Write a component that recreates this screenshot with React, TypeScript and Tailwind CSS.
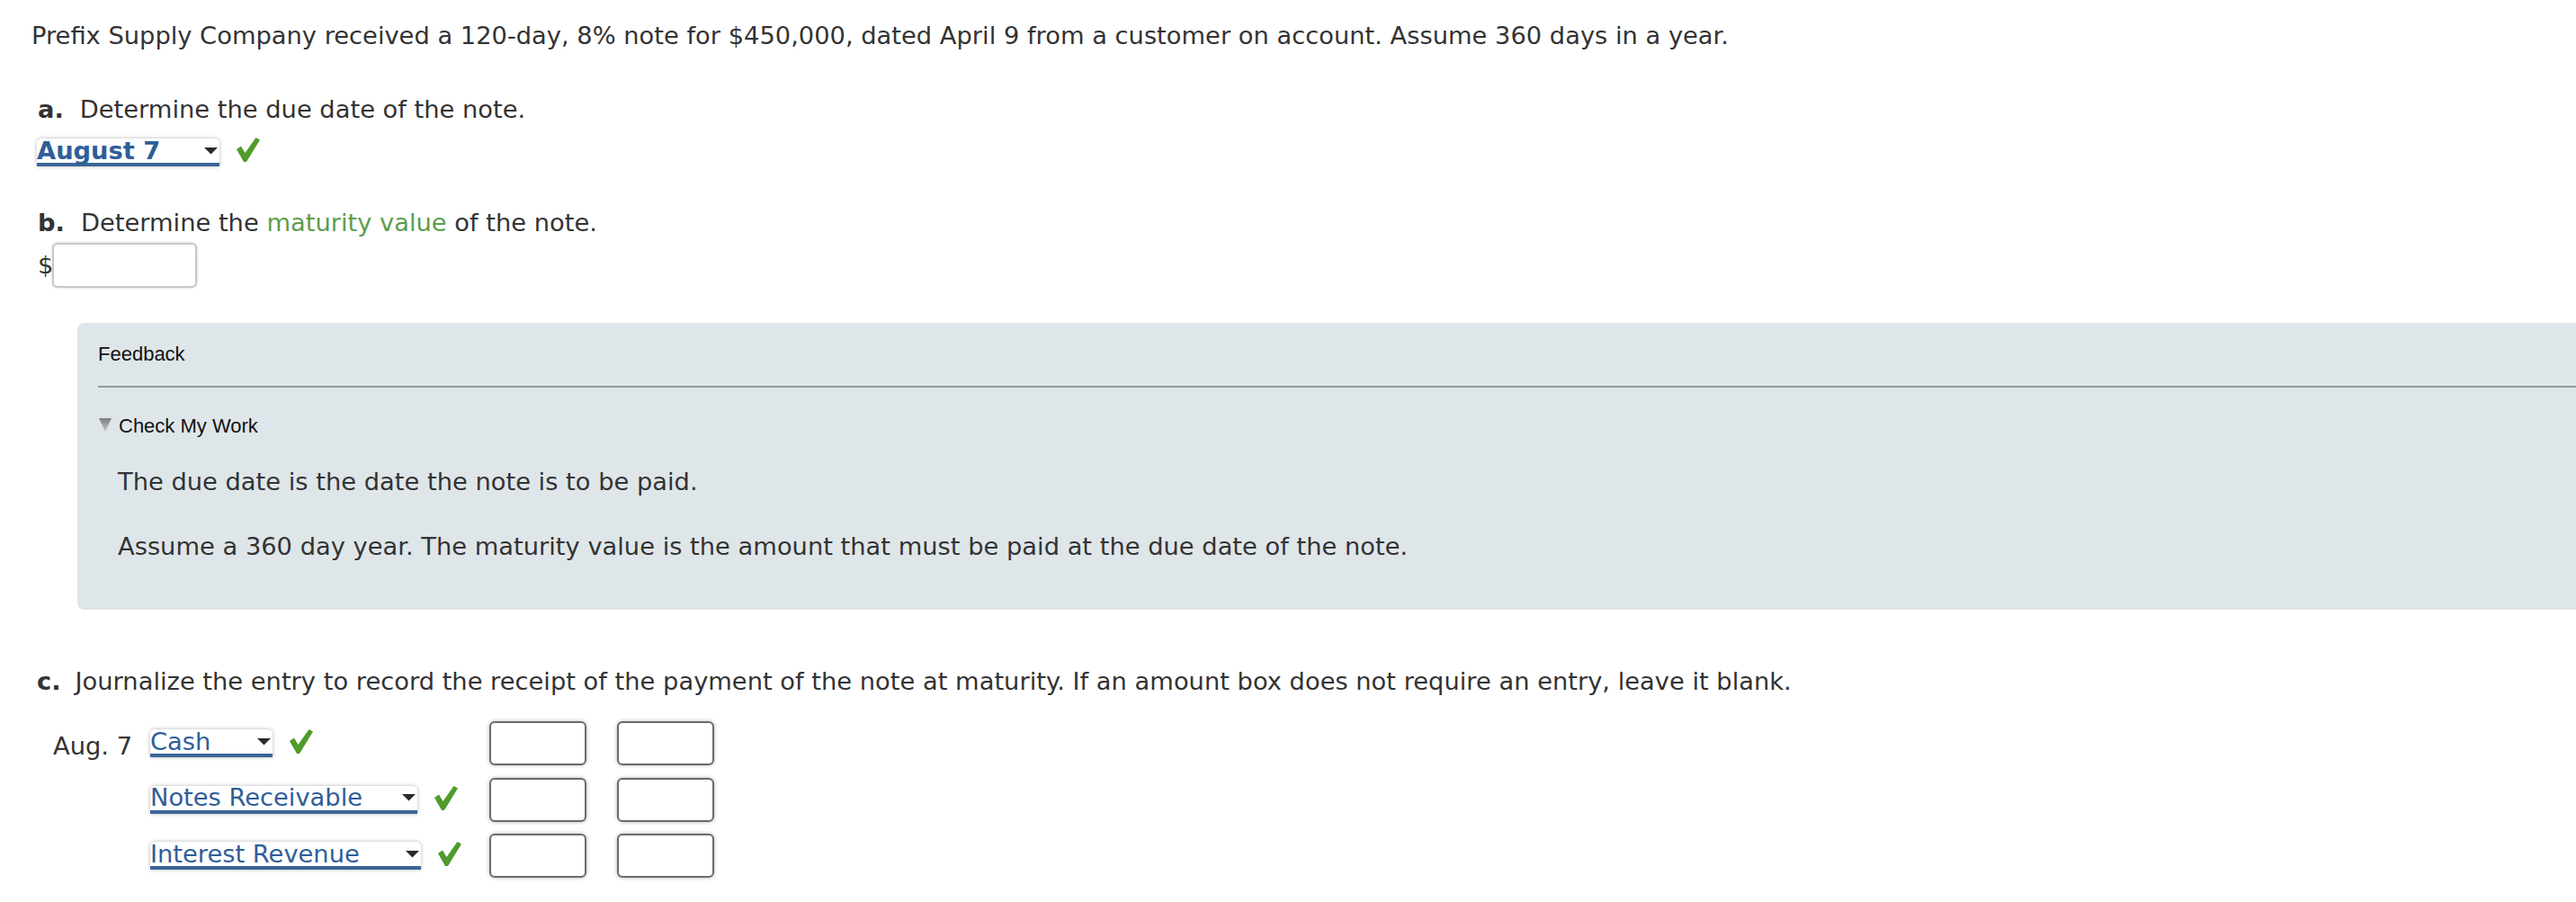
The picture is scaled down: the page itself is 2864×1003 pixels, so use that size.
import React from "react";

function Check() {
  return (
    <svg width="26" height="27" viewBox="0 0 26 27" className="shrink-0">
      <path d="M0 13 L5 9.5 L9.5 17 L21.5 0 L26 2.5 L11 27 L8 27 Z" fill="#4f9b2c" />
    </svg>
  );
}

function Caret() {
  return (
    <svg width="15" height="8" viewBox="0 0 15 8" className="shrink-0">
      <polygon points="0,0 15,0 7.5,7.5" fill="#2b2b2b" />
    </svg>
  );
}

function Select({ label, width, bold }: { label: string; width: string; bold?: boolean }) {
  return (
    <div
      className={`flex h-[31px] items-center justify-between rounded-t-[5px] border-b-[4px] border-[#3a6598] bg-white pr-[2px] text-[#2f5e98] shadow-[0_0_4px_rgba(0,0,0,0.3)] ${width} ${bold ? "font-bold" : ""}`}
    >
      <span className="leading-[26px]">{label}</span>
      <Caret />
    </div>
  );
}

function Box() {
  return <div className="h-[49px] w-[108px] rounded-[6px] border-2 border-[#6b6b6b] bg-white shadow-[0_0_4px_rgba(0,0,0,0.3)]" />;
}

function Row({ date, label, width }: { date?: string; label: string; width: string }) {
  return (
    <div className="flex items-center">
      <div className="w-[108px] pt-[6px] leading-[32px]">{date ?? ""}</div>
      <div className="flex w-[377px] items-center gap-[19px]">
        <Select label={label} width={width} />
        <div className="-mt-[4px]">
          <Check />
        </div>
      </div>
      <div className="flex gap-[34px]">
        <Box />
        <Box />
      </div>
    </div>
  );
}

export default function App() {
  return (
    <div className="min-h-[1003px] bg-white pl-[35px] pt-[24px] font-['DejaVu_Sans',Verdana,sans-serif] text-[27.3px] leading-[32px] text-[#333]">
      <p>
        Prefix Supply Company received a 120-day, 8% note for $450,000, dated April 9 from a customer on account. Assume 360 days in a year.
      </p>

      <p className="mt-[50px] pl-[7px]">
        <span className="mr-[18px] font-bold">a.</span>Determine the due date of the note.
      </p>
      <div className="mt-[16px] flex items-start gap-[19px] pl-[6px]">
        <Select label="August 7" width="w-[203px]" bold />
        <div className="-mt-[1px]">
          <Check />
        </div>
      </div>

      <p className="mt-[47px] pl-[7px]">
        <span className="mr-[18px] font-bold">b.</span>Determine the <span className="text-[#5c9d4e]">maturity value</span> of the note.
      </p>
      <div className="mt-[6px] flex items-center pl-[7px]">
        <span className="w-[16px]">$</span>
        <div className="h-[50px] w-[161px] rounded-[6px] border-2 border-[#c8c8c8] bg-white shadow-[0_0_3px_rgba(0,0,0,0.2)]" />
      </div>

      <div className="ml-[51px] mt-[39px] rounded-l-[8px] bg-[#dfe6e9] pb-[54px] pl-[23px] pt-[22px]">
        <div className="font-['Liberation_Sans',Arial,sans-serif] text-[22px] leading-[25px] text-[#111]">Feedback</div>
        <div className="mt-[23px] h-[2px] bg-[#949a9e]" />
        <div className="mt-[30px] flex items-center font-['Liberation_Sans',Arial,sans-serif] text-[22px] leading-[25px] text-[#111]">
          <svg width="14" height="15" viewBox="0 0 14 15" className="mr-[8px] ml-[1px] -mt-[2px]">
            <defs>
              <linearGradient id="tg" x1="0" y1="0" x2="0" y2="1">
                <stop offset="0" stopColor="#7d7d7d" />
                <stop offset="1" stopColor="#c9c9c9" />
              </linearGradient>
            </defs>
            <polygon points="0,0 14,0 7,15" fill="url(#tg)" />
          </svg>
          <span>Check My Work</span>
        </div>
        <p className="mt-[34px] pl-[22px]">The due date is the date the note is to be paid.</p>
        <p className="mt-[40px] pl-[22px]">
          Assume a 360 day year. The maturity value is the amount that must be paid at the due date of the note.
        </p>
      </div>

      <p className="mt-[64px] pl-[6px]">
        <span className="mr-[16px] font-bold">c.</span>Journalize the entry to record the receipt of the payment of the note at maturity. If an amount box does not require an entry, leave it blank.
      </p>

      <div className="mt-[28px] flex flex-col gap-[13.5px] pl-[24px]">
        <Row date="Aug. 7" label="Cash" width="w-[136px]" />
        <Row label="Notes Receivable" width="w-[297px]" />
        <Row label="Interest Revenue" width="w-[301px]" />
      </div>
    </div>
  );
}
